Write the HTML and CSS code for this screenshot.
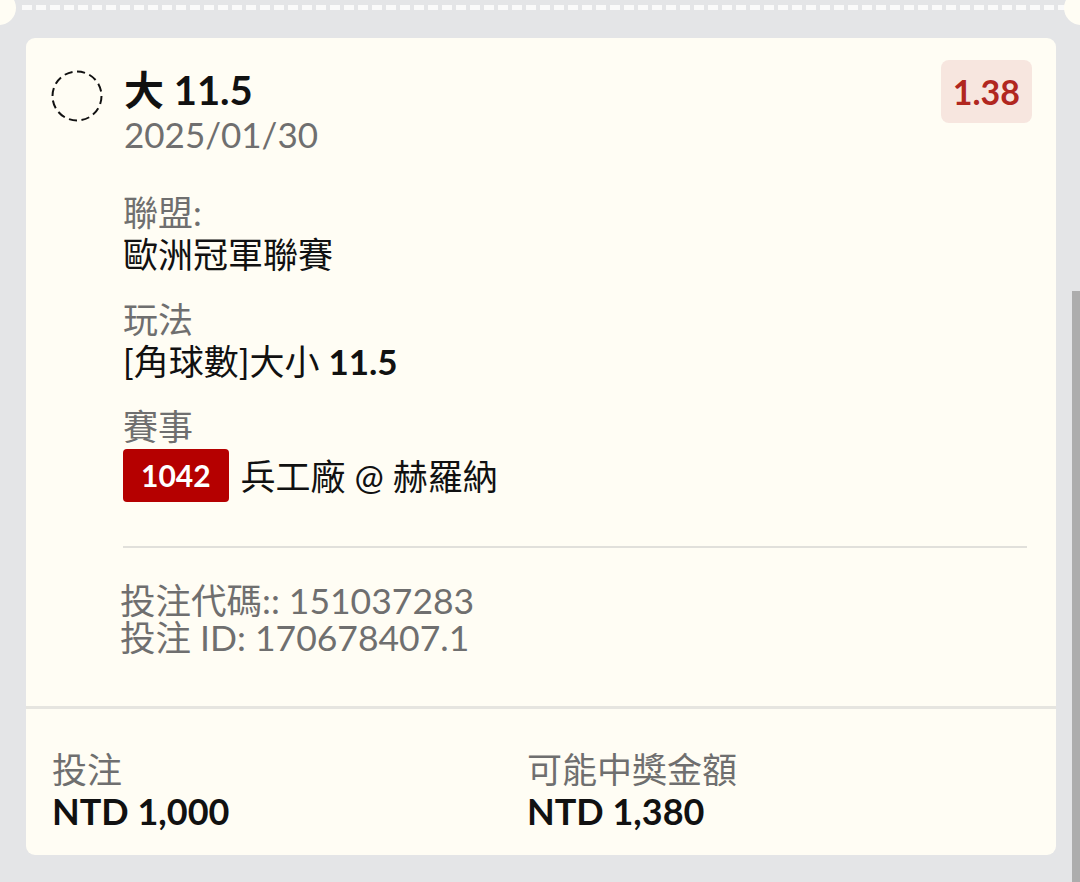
FILE: index.html
```html
<!DOCTYPE html>
<html lang="zh-Hant">
<head>
    <meta charset="UTF-8">
    <meta name="viewport" content="width=device-width, initial-scale=1.0">
    <title>投注單</title>
    <link rel="stylesheet" href="styles.css">
</head>
<body>

<div class="tear">
    <span class="notch notch-left"></span>
    <span class="perforation"></span>
    <span class="notch notch-right"></span>
</div>

<div class="ticket">
    <div class="ticket-body">
        <div class="head">
            <svg class="status" width="54" height="54" viewBox="0 0 54 54">
                <circle cx="27" cy="27" r="24.5" fill="none" stroke="#111" stroke-width="2" pathLength="120" stroke-dasharray="6.4 3.6"></circle>
            </svg>
            <div class="head-text">
                <div class="selection">大 11.5</div>
                <div class="date">2025/01/30</div>
            </div>
            <div class="odds">1.38</div>
        </div>

        <div class="details">
            <div class="field">
                <div class="label">聯盟:</div>
                <div class="value">歐洲冠軍聯賽</div>
            </div>
            <div class="field">
                <div class="label">玩法</div>
                <div class="value">[角球數]大小 <b>11.5</b></div>
            </div>
            <div class="field">
                <div class="label">賽事</div>
                <div class="value event">
                    <span class="match-no">1042</span>
                    <span>兵工廠 @ 赫羅納</span>
                </div>
            </div>

            <hr class="divider">

            <div class="meta">
                <div>投注代碼:: 151037283</div>
                <div>投注 ID: 170678407.1</div>
            </div>
        </div>
    </div>

    <div class="ticket-foot">
        <div class="sum">
            <div class="label">投注</div>
            <div class="amount">NTD 1,000</div>
        </div>
        <div class="sum">
            <div class="label">可能中獎金額</div>
            <div class="amount">NTD 1,380</div>
        </div>
    </div>
</div>

<div class="scrollbar"></div>

</body>
</html>
```

FILE: styles.css
```css
body {
    margin: 0;
    height: 882px;
    overflow: hidden;
    background-color: #e4e5e7;
    font-family: Lato, "Noto Sans CJK TC", sans-serif;
    color: #111;
}

/* perforated edge of the ticket above */
.tear {
    position: relative;
    height: 38px;
    overflow: hidden;
}

.perforation {
    display: block;
    margin: 0 14px 0 22px;
    position: relative;
    top: 5px;
    height: 5px;
    background: repeating-linear-gradient(90deg, #fafafa 0 10px, transparent 10px 14px);
}

.notch {
    position: absolute;
    top: -9px;
    width: 34px;
    height: 34px;
    border-radius: 50%;
    background-color: #fffdf4;
}

.notch-left {
    left: -18px;
}

.notch-right {
    right: -18px;
}

.ticket {
    width: 1030px;
    margin-left: 26px;
    background-color: #fffdf4;
    border-radius: 9px;
    overflow: hidden;
}

.ticket-body {
    padding: 22px 25px 50px 25px;
}

.head {
    display: flex;
    align-items: flex-start;
}

.status {
    flex: none;
    margin-top: 9px;
    margin-left: -1px;
}

.head-text {
    flex: 1;
    margin-top: 7px;
    margin-left: 20px;
}

.selection {
    font-size: 40px;
    font-weight: bold;
    line-height: 47px;
}

.date {
    font-size: 35px;
    line-height: 40px;
    color: #6f6f6f;
}

.odds {
    height: 63px;
    line-height: 63px;
    padding: 0 12px;
    margin-right: -1px;
    border-radius: 8px;
    background-color: #f7e6df;
    color: #b1271f;
    font-size: 34px;
    font-weight: bold;
}

.details {
    margin-left: 72px;
    margin-top: 37px;
    margin-right: 4px;
}

.field {
    margin-bottom: 23px;
    font-size: 35px;
    line-height: 42px;
}

.label {
    color: #6f6f6f;
}

.value b {
    font-weight: bold;
}

.event {
    display: flex;
    align-items: center;
    gap: 12px;
    margin-top: 2px;
}

.match-no {
    height: 53px;
    line-height: 53px;
    padding: 0 18px;
    border-radius: 4px;
    background-color: #b50000;
    color: #fff;
    font-size: 30px;
    font-weight: bold;
}

.divider {
    margin: 44px 0 0 0;
    border: none;
    border-top: 2px solid #e1e0db;
}

.meta {
    margin-top: 34px;
    margin-left: -3px;
    font-size: 35.5px;
    line-height: 37px;
    color: #6f6f6f;
}

.ticket-foot {
    display: grid;
    grid-template-columns: 475px 1fr;
    padding: 39px 26px 23px 26px;
    border-top: 3px solid #e6e5e0;
}

.sum .label {
    font-size: 35px;
    line-height: 42px;
}

.amount {
    font-size: 36px;
    font-weight: bold;
    line-height: 42px;
}

.scrollbar {
    position: absolute;
    right: 0;
    top: 291px;
    width: 8px;
    height: 591px;
    background-color: #adadad;
}
```
